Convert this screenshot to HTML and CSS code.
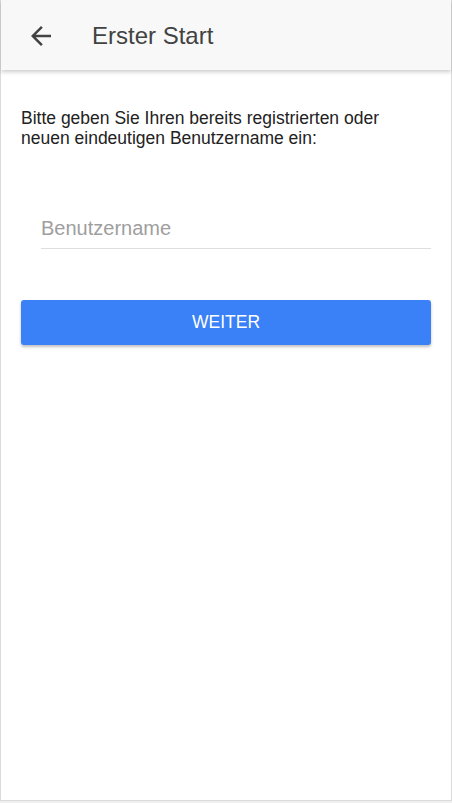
FILE: index.html
```html
<!DOCTYPE html>
<html lang="de">
<head>
<meta charset="utf-8">
<title>Erster Start</title>
<link rel="stylesheet" href="styles.css">
</head>
<body>
<div class="app">
  <header class="toolbar">
    <button class="back" aria-label="Zurück">
      <svg viewBox="0 0 24 24" width="30" height="30"><path d="M20 11H7.83l5.59-5.59L12 4l-8 8 8 8 1.41-1.41L7.83 13H20v-2z" fill="#424242"/></svg>
    </button>
    <h1 class="title">Erster Start</h1>
  </header>
  <main class="content">
    <p class="intro">Bitte geben Sie Ihren bereits registrierten oder neuen eindeutigen Benutzername ein:</p>
    <div class="field">
      <input class="input" type="text" placeholder="Benutzername">
    </div>
    <button class="primary">WEITER</button>
  </main>
</div>
</body>
</html>
```
FILE: styles.css
```css
html, body {
  margin: 0;
  padding: 0;
}
body {
  background: #f0f0f0;
  font-family: "Liberation Sans", Arial, sans-serif;
}
.app {
  box-sizing: border-box;
  width: 452px;
  height: 801px;
  background: #fff;
  border: 1px solid #dadada;
  border-top: none;
  display: flex;
  flex-direction: column;
}
.toolbar {
  height: 70px;
  flex: none;
  background: #f8f8f8;
  box-shadow: 0 2px 4px rgba(0,0,0,0.2);
  display: flex;
  align-items: center;
  padding-left: 25px;
  padding-top: 1px;
  box-sizing: border-box;
  position: relative;
  z-index: 1;
}
.back {
  border: none;
  background: none;
  padding: 0;
  width: 30px;
  height: 30px;
  display: flex;
}
.title {
  margin: 0 0 0 36px;
  font-size: 24px;
  font-weight: normal;
  color: #424242;
}
.content {
  padding: 38px 20px 0;
}
.intro {
  margin: 0;
  font-size: 17.5px;
  line-height: 20px;
  color: #222;
}
.field {
  margin: 61px 0 0 20px;
  border-bottom: 1px solid #dedede;
}
.input {
  display: block;
  width: 100%;
  box-sizing: border-box;
  border: none;
  outline: none;
  padding: 8px 0 8px;
  font-family: inherit;
  font-size: 20px;
  line-height: 23px;
  color: #333;
  background: transparent;
}
.input::placeholder {
  color: #9e9e9e;
}
.primary {
  display: block;
  width: 100%;
  height: 45px;
  margin-top: 51px;
  border: none;
  border-radius: 3px;
  background: #3a80f6;
  color: #fff;
  font-family: inherit;
  font-size: 17.5px;
  box-shadow: 0 2px 3px rgba(0,0,0,0.25);
}
```
